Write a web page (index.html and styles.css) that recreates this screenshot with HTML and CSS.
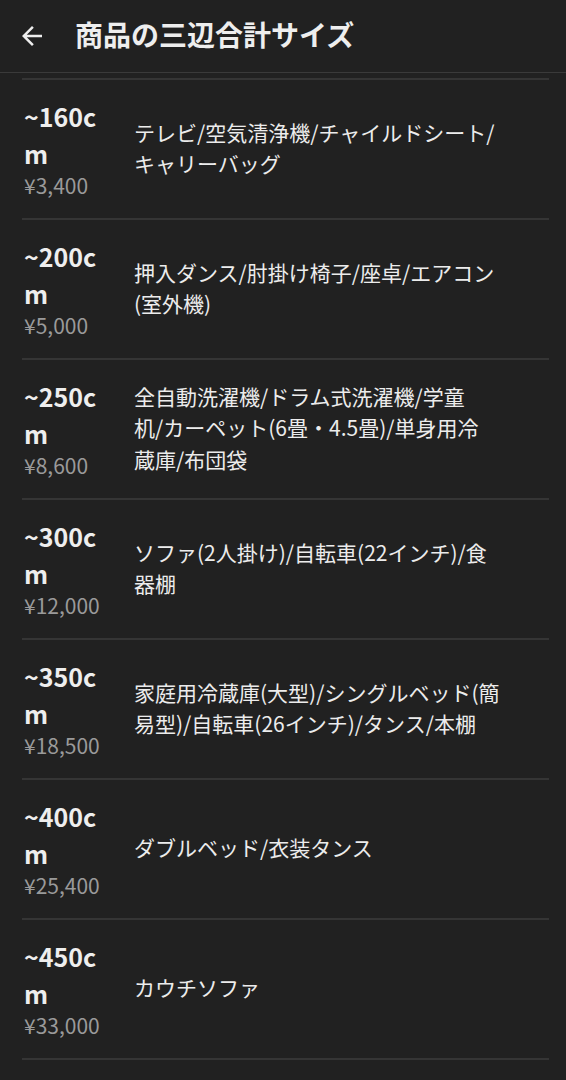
FILE: index.html
```html
<!DOCTYPE html>
<html lang="ja">
<head>
<meta charset="utf-8">
<link rel="stylesheet" href="styles.css">
</head>
<body>
<header class="header">
  <svg class="back" viewBox="0 0 24 24" width="30" height="30"><path d="M20 11H7.83l5.59-5.59L12 4l-8 8 8 8 1.41-1.41L7.83 13H20v-2z" fill="#eeeeee"/></svg>
  <h1 class="title">商品の三辺合計サイズ</h1>
</header>
<ul class="list">
  <li class="item"><div class="size"><div class="label">~160cm</div><div class="price">¥3,400</div></div><p class="desc">テレビ/空気清浄機/チャイルドシート/キャリーバッグ</p></li>
  <li class="item"><div class="size"><div class="label">~200cm</div><div class="price">¥5,000</div></div><p class="desc">押入ダンス/肘掛け椅子/座卓/エアコン(室外機)</p></li>
  <li class="item"><div class="size"><div class="label">~250cm</div><div class="price">¥8,600</div></div><p class="desc">全自動洗濯機/ドラム式洗濯機/学童<br>机/カーペット(6畳・4.5畳)/単身用冷<br>蔵庫/布団袋</p></li>
  <li class="item"><div class="size"><div class="label">~300cm</div><div class="price">¥12,000</div></div><p class="desc">ソファ(2人掛け)/自転車(22インチ)/食器棚</p></li>
  <li class="item"><div class="size"><div class="label">~350cm</div><div class="price">¥18,500</div></div><p class="desc">家庭用冷蔵庫(大型)/シングルベッド(簡易型)/自転車(26インチ)/タンス/本棚</p></li>
  <li class="item"><div class="size"><div class="label">~400cm</div><div class="price">¥25,400</div></div><p class="desc">ダブルベッド/衣装タンス</p></li>
  <li class="item"><div class="size"><div class="label">~450cm</div><div class="price">¥33,000</div></div><p class="desc">カウチソファ</p></li>
</ul>
</body>
</html>
```
FILE: styles.css
```css
html, body {
  margin: 0;
  padding: 0;
  background: #212121;
  color: #eeeeee;
  font-family: "Noto Sans CJK JP", "Noto Sans", sans-serif;
}
.header {
  height: 72px;
  display: flex;
  align-items: center;
  border-bottom: 1px solid #3a3a3a;
  padding-left: 17px;
}
.back {
  display: block;
}
.title {
  margin: 0 0 4px 28px;
  font-size: 28px;
  font-weight: 700;
  line-height: 1;
  color: #eeeeee;
}
.list {
  list-style: none;
  margin: 5px 17px 0 22px;
  padding: 0;
  border-top: 2px solid #353535;
}
.item {
  display: flex;
  align-items: center;
  padding: 18px 0 20px;
  border-bottom: 2px solid #353535;
}
.size {
  width: 88px;
  flex: none;
  padding-left: 2px;
}
.label {
  font-size: 25px;
  font-weight: 700;
  line-height: 37px;
  word-break: break-all;
  color: #eeeeee;
}
.price {
  font-size: 21px;
  line-height: 26px;
  color: #9a9a9a;
}
.desc {
  margin: 0 0 0 22px;
  width: 366px;
  font-size: 21px;
  line-height: 31.5px;
  color: #ececec;
}
```
